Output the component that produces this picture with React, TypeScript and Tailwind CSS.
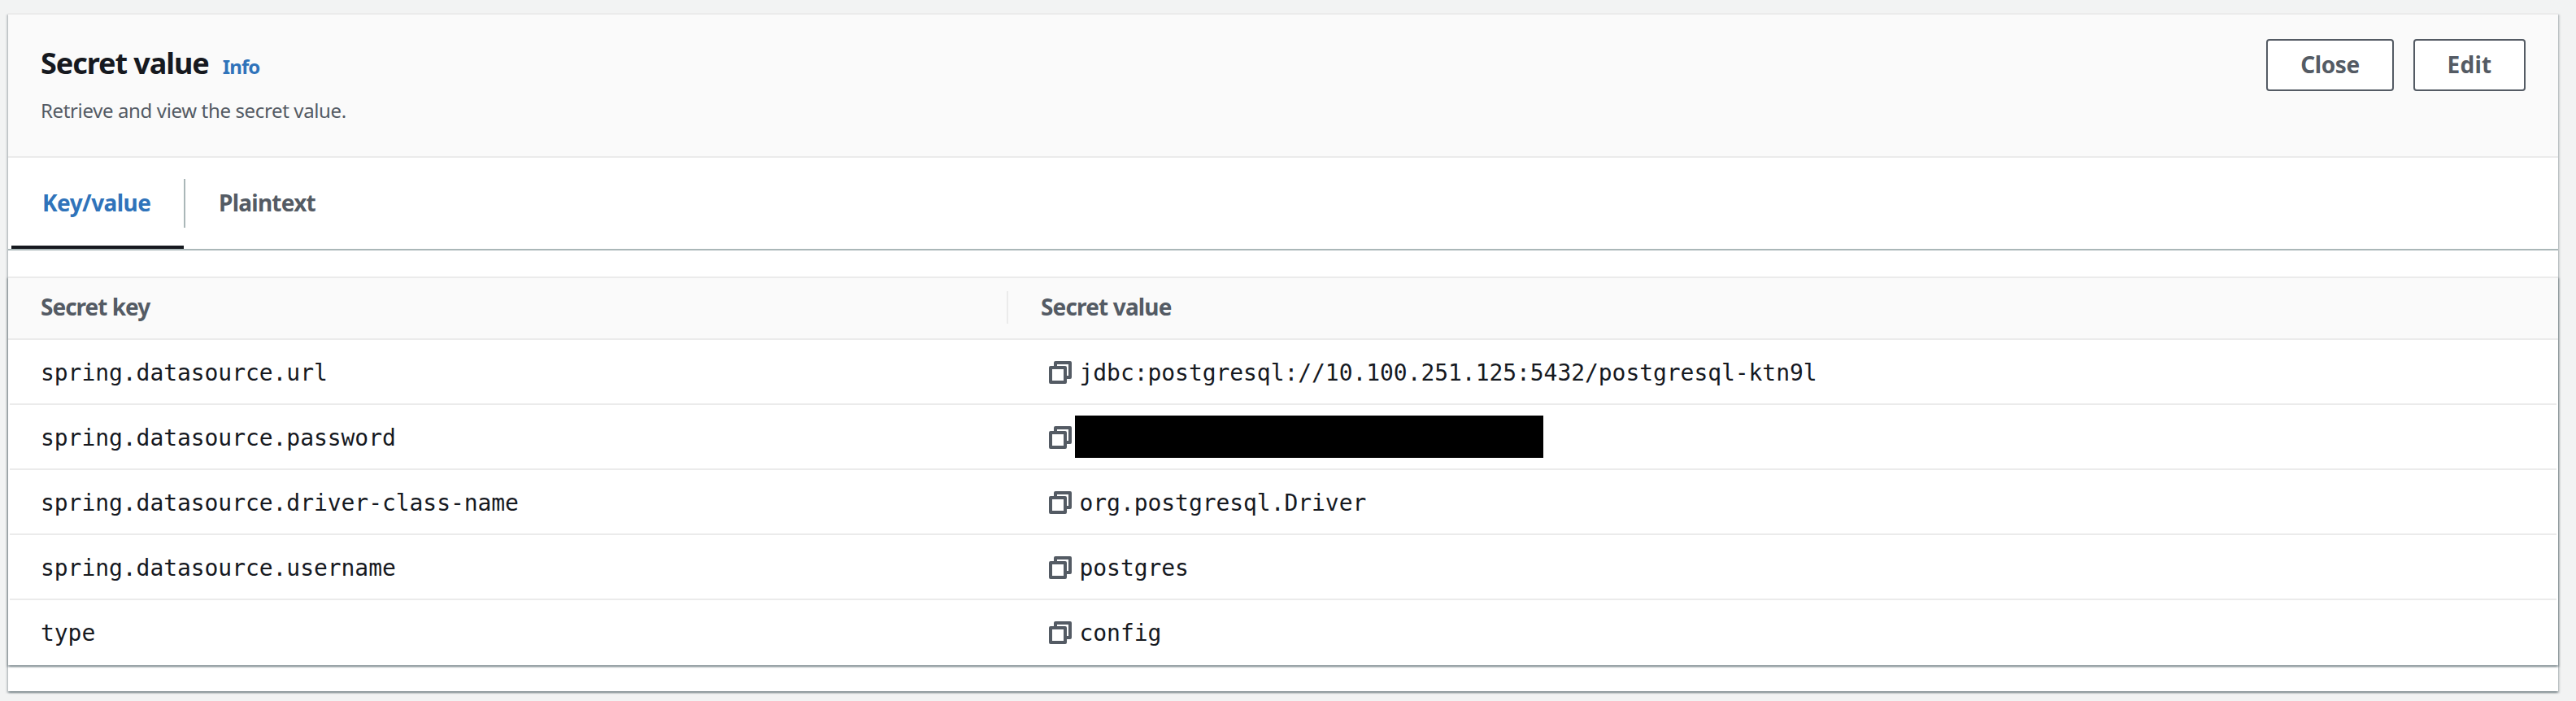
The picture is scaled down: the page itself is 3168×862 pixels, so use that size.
const CARD_SHADOW =
  'shadow-[0_2px_2px_0_rgba(0,28,36,0.3),2px_2px_2px_0_rgba(0,28,36,0.15),-2px_2px_2px_0_rgba(0,28,36,0.15)]';

type Entry = { key: string; value: string; redacted?: boolean };

const entries: Entry[] = [
  { key: 'spring.datasource.url', value: 'jdbc:postgresql://10.100.251.125:5432/postgresql-ktn9l' },
  { key: 'spring.datasource.password', value: '', redacted: true },
  { key: 'spring.datasource.driver-class-name', value: 'org.postgresql.Driver' },
  { key: 'spring.datasource.username', value: 'postgres' },
  { key: 'type', value: 'config' },
];

function CopyIcon() {
  return (
    <svg width="28" height="28" viewBox="0 0 28 28" fill="none" stroke="#545b64" strokeWidth="4" strokeLinejoin="round" className="shrink-0">
      <path d="M8 6V2H26V20H21" />
      <rect x="2" y="8" width="18" height="18" />
    </svg>
  );
}

function Header() {
  return (
    <header className="flex h-[178px] items-start justify-between border-y-2 border-[#ebebeb] bg-[#fafafa] px-10">
      <div>
        <div className="mt-9 flex h-12 items-baseline leading-[48px]">
          <h2 className="text-[36px] font-bold tracking-[-1.06px] text-[#16191f]">Secret value</h2>
          <a href="#" className="ml-[17px] text-[24px] font-bold tracking-[-0.9px] text-[#2f73ba]">Info</a>
        </div>
        <p className="mt-[14px] text-[24px] leading-[40px] tracking-[-0.36px] text-[#545b64]">
          Retrieve and view the secret value.
        </p>
      </div>
      <div className="mt-[30px] flex gap-6 text-[28px] font-bold text-[#545b64]">
        <button className="flex h-16 w-[157px] items-center justify-center rounded-[4px] border-2 border-[#545b64] bg-white pb-[2px] tracking-[-0.4px]">
          Close
        </button>
        <button className="flex h-16 w-[138px] items-center justify-center rounded-[4px] border-2 border-[#545b64] bg-white pb-[2px] tracking-[0.3px]">
          Edit
        </button>
      </div>
    </header>
  );
}

function Tabs() {
  return (
    <nav className="flex h-[114px] items-stretch border-b-2 border-[#aab7b8] pl-1 text-[28px] font-bold">
      <button className="flex w-[212px] items-start border-b-4 border-[#16191f] pl-[38px] pt-[35px] leading-[40px] tracking-[-0.55px] text-[#2f73ba]">
        Key/value
      </button>
      <span className="mt-[26px] h-[60px] w-[2px] bg-[#aab7b8]" />
      <button className="flex items-start pl-[41px] pt-[35px] leading-[40px] tracking-[-0.75px] text-[#545b64]">
        Plaintext
      </button>
    </nav>
  );
}

function SecretTable() {
  return (
    <section className={`mt-8 h-[478px] border-t-2 border-[#ebebeb] bg-white ${CARD_SHADOW}`}>
      <div className="flex h-[76px] items-start border-b-2 border-[#ebebeb] bg-[#fafafa] text-[28px] font-bold leading-[40px] text-[#545b64]">
        <div className="w-[1228px] pl-10 pt-[15px] tracking-[-1px]">Secret key</div>
        <span className="mt-4 h-10 w-[2px] bg-[#ebebeb]" />
        <div className="pl-10 pt-[15px] tracking-[-0.85px]">Secret value</div>
      </div>
      <div className="px-[2px] font-['DejaVu_Sans_Mono',monospace] text-[28px] leading-[40px] tracking-[-0.06px] text-[#16191f]">
        {entries.map((entry) => (
          <div key={entry.key} className="flex h-20 items-center border-b-2 border-[#ebebeb] pt-[2px] last:border-transparent">
            <div className="w-[1278px] pl-[38px] pt-[2px]">{entry.key}</div>
            <CopyIcon />
            {entry.redacted ? (
              <div className="mb-[2px] ml-1 h-[52px] w-[576px] bg-black" />
            ) : (
              <div className="pl-[9.5px] pt-[2px]">{entry.value}</div>
            )}
          </div>
        ))}
      </div>
    </section>
  );
}

export default function App() {
  return (
    <main className="h-[862px] w-[3168px] overflow-hidden bg-[#f2f3f3] pl-[10px] pt-4 font-['Noto_Sans',sans-serif]">
      <article className={`h-[834px] w-[3136px] bg-white ${CARD_SHADOW}`}>
        <Header />
        <Tabs />
        <SecretTable />
      </article>
    </main>
  );
}
